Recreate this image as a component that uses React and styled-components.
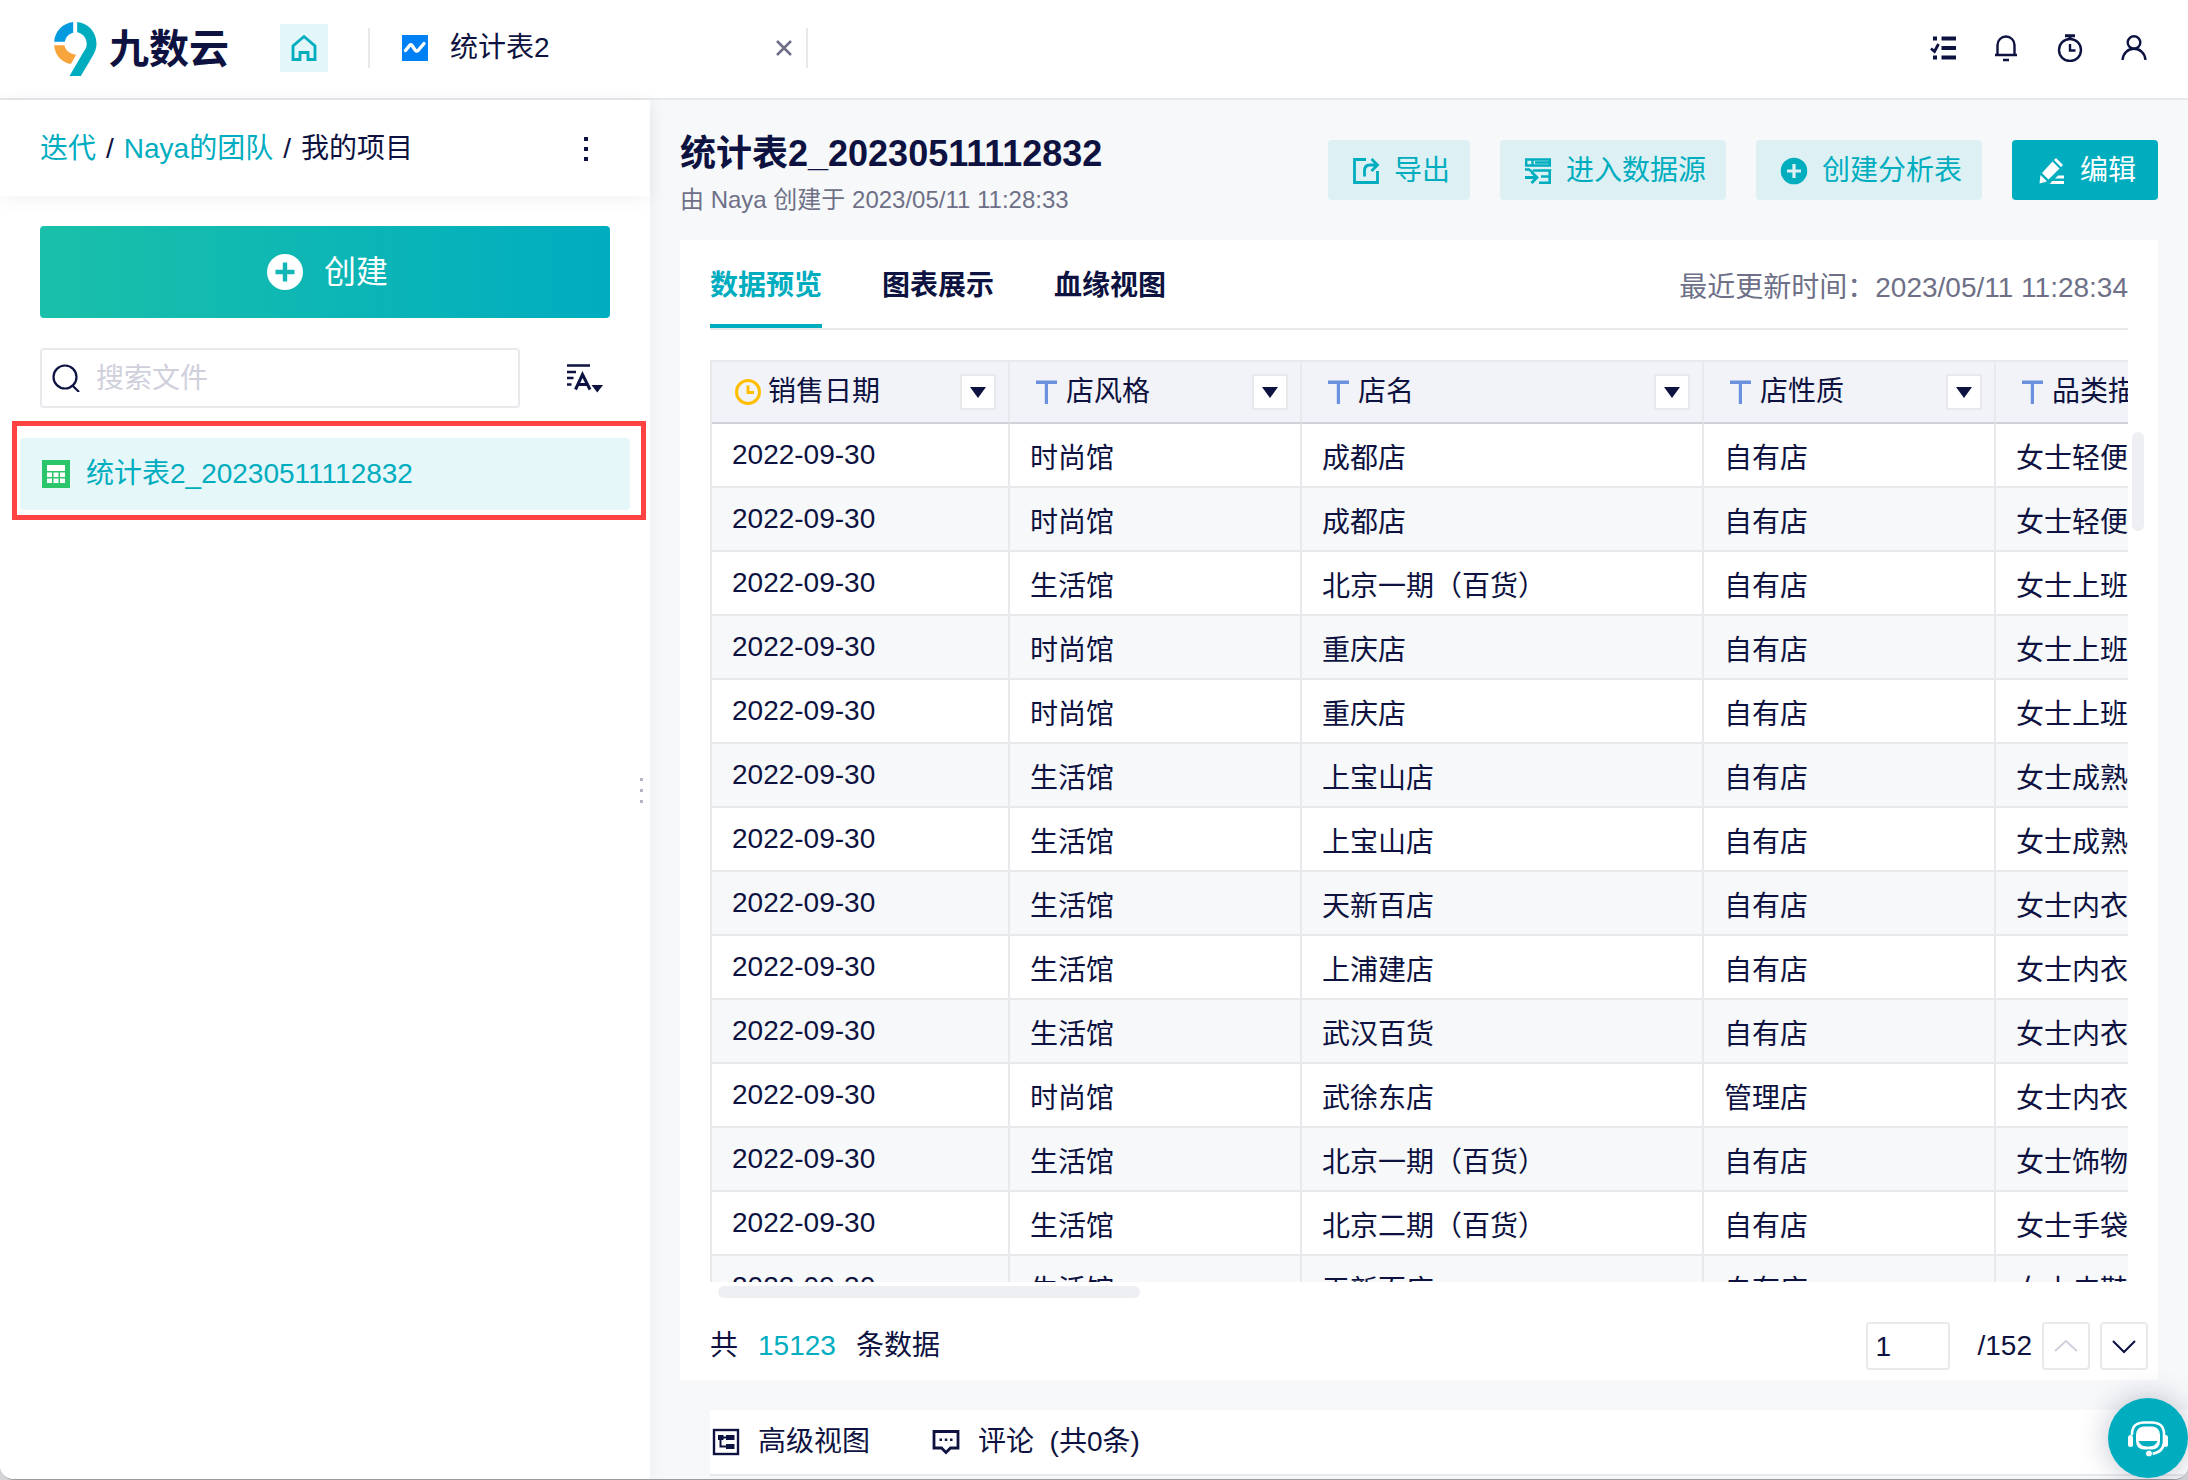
import React, {useState} from 'react'
import styled, {createGlobalStyle} from 'styled-components'

const navy = '#0d1240'
const teal = '#00adbf'
const line = '#e8e9ed'
const grey = '#6e7087'

const GlobalStyle = createGlobalStyle`
    * {
        box-sizing: border-box;
    }

    body {
        margin: 0;
        background: #d4d5d8;
    }

    body, button, input {
        font-family: "Liberation Sans", "Noto Sans CJK SC", sans-serif;
        font-size: 28px;
        line-height: 40px;
        color: ${navy};
    }

    button {
        padding: 0;
        border: 0;
        background: none;
        cursor: pointer;
    }

    a {
        color: ${teal};
        text-decoration: none;
    }

    svg {
        display: block;
        flex: none;
    }
`

const Window = styled.div`
    display: flex;
    flex-direction: column;
    height: 100vh;
    overflow: hidden;
    background: white;
    border-bottom: 1px solid #9c9c9e;
    border-radius: 0 0 14px 14px;
`

// top bar

const TopBar = styled.header`
    display: flex;
    align-items: center;
    height: 100px;
    flex: none;
    padding: 0 40px 2px 54px;
    border-bottom: 2px solid ${line};
`

const Brand = styled.div`
    display: flex;
    align-items: center;
    gap: 12px;
    width: 226px;
    padding-top: 2px;
    font-size: 40px;
    font-weight: bold;
    line-height: 48px;
    white-space: nowrap;
`

const HomeButton = styled.button`
    display: flex;
    align-items: center;
    justify-content: center;
    width: 48px;
    height: 48px;
    margin-right: 40px;
    background: #e3f6f9;
`

const OpenTab = styled.div`
    display: flex;
    align-items: center;
    width: 440px;
    height: 40px;
    padding: 0 14px 0 32px;
    border-left: 2px solid ${line};
    border-right: 2px solid ${line};
`

const OpenTabName = styled.span`
    flex: 1;
    margin-left: 22px;
`

const TopTools = styled.nav`
    display: flex;
    gap: 36px;
    margin-left: auto;
`

// left side

const Body = styled.div`
    display: flex;
    flex: 1;
    min-height: 0;
`

const Sidebar = styled.aside`
    position: relative;
    width: 650px;
    flex: none;
    background: white;
    box-shadow: 0 4px 20px rgba(13, 18, 64, 0.05);
`

const Crumbs = styled.div`
    display: flex;
    align-items: center;
    gap: 10px;
    height: 96px;
    padding: 2px 54px 0 40px;
    box-shadow: 0 4px 16px rgba(13, 18, 64, 0.05);
`

const MoreButton = styled.button`
    margin-left: auto;
`

const CreateButton = styled.button`
    display: flex;
    align-items: center;
    justify-content: center;
    gap: 20px;
    width: calc(100% - 80px);
    height: 92px;
    margin: 30px 40px;
    padding-left: 4px;
    border-radius: 4px;
    background: linear-gradient(90deg, #1ac0a9, #00adc0);
    color: white;
    font-size: 32px;
`

const SearchRow = styled.div`
    display: flex;
    align-items: center;
    justify-content: space-between;
    padding: 0 46px 0 40px;
`

const SearchBox = styled.label`
    display: flex;
    align-items: center;
    gap: 16px;
    width: 480px;
    height: 60px;
    padding: 0 10px;
    border: 2px solid ${line};
    border-radius: 4px;
`

const SearchInput = styled.input`
    flex: 1;
    min-width: 0;
    padding: 2px 0 0;
    border: 0;
    outline: 0;

    &::placeholder {
        color: #cfd0dc;
    }
`

const FileList = styled.ul`
    list-style: none;
    margin: 30px 20px 0;
    padding: 0;
`

const FileItem = styled.li`
    position: relative;
`

const FileLink = styled.a`
    display: flex;
    align-items: center;
    gap: 16px;
    height: 72px;
    padding: 0 22px;
    border-radius: 4px;
    background: #e5f7f9;
`

// red frame over the new file
const Marker = styled.span`
    position: absolute;
    inset: -17px -16px -10px -8px;
    border: 5px solid #ff4343;
    pointer-events: none;
`

const Grip = styled.span`
    position: absolute;
    right: 7px;
    top: 678px;
    display: grid;
    gap: 8px;

    i {
        width: 3px;
        height: 3px;
        background: #b4b5c0;
    }
`

// right side

const Main = styled.main`
    display: flex;
    flex: 1;
    min-width: 0;
    flex-direction: column;
    background: #f7f8fa;
`

const TitleRow = styled.div`
    display: flex;
    align-items: flex-start;
    justify-content: space-between;
    height: 140px;
    flex: none;
    padding: 30px 30px 0;
`

const Title = styled.h1`
    margin: 0;
    font-size: 36px;
    line-height: 48px;
`

const Subtitle = styled.p`
    margin: 4px 0 0;
    color: ${grey};
    font-size: 24px;
    line-height: 36px;
`

const Actions = styled.div`
    display: flex;
    gap: 30px;
    padding-top: 10px;
`

const ActionButton = styled.button`
    display: flex;
    align-items: center;
    gap: 14px;
    height: 60px;
    padding: ${props => props.$primary ? "2px 22px 0 26px" : "2px 20px 0 24px"};
    border-radius: 4px;
    background: ${props => props.$primary ? teal : "#ddf1f4"};
    color: ${props => props.$primary ? "white" : teal};
    white-space: nowrap;
`

const Card = styled.section`
    display: flex;
    flex: 1;
    min-height: 0;
    flex-direction: column;
    margin: 0 30px;
    background: white;
`

const TabRow = styled.div`
    display: flex;
    justify-content: space-between;
    height: 90px;
    flex: none;
    margin: 0 30px 30px;
    border-bottom: 2px solid ${line};
`

const Tabs = styled.div`
    display: flex;
    gap: 60px;
`

const Tab = styled.button`
    padding: 26px 0 18px;
    border-bottom: 4px solid ${props => props.$active ? teal : "transparent"};
    color: ${props => props.$active ? teal : navy};
    font-weight: bold;
`

const Updated = styled.span`
    padding-top: 28px;
    color: ${grey};
`

const TableArea = styled.div`
    display: grid;
    grid-template-columns: 1fr 12px;
    column-gap: 4px;
    flex: 1;
    min-height: 0;
    padding: 0 14px 0 30px;
`

const TableView = styled.div`
    min-width: 0;
    overflow: hidden;
`

const DataTable = styled.table`
    width: 1700px;
    table-layout: fixed;
    border-collapse: separate;
    border-spacing: 0;
    border-left: 2px solid ${line};
    white-space: nowrap;
`

const HeadCell = styled.th`
    width: ${props => props.$width}px;
    height: 64px;
    padding: 0 12px 0 22px;
    border-top: 2px solid ${line};
    border-right: 2px solid ${line};
    border-bottom: 2px solid #cfd1d8;
    background: #f2f3f8;
    font-weight: normal;
`

const HeadInner = styled.div`
    display: flex;
    align-items: center;
    gap: 6px;
`

const FilterButton = styled.button`
    display: flex;
    align-items: center;
    justify-content: center;
    width: 36px;
    height: 36px;
    margin-left: auto;
    border: 2px solid ${line};
    background: white;
`

const Row = styled.tr`
    background: ${props => props.$odd ? "#f7f8fa" : "white"};
`

const Cell = styled.td`
    height: 64px;
    padding: ${props => props.$text ? "8px 20px 0" : "0 20px"};
    border-right: 2px solid ${line};
    border-bottom: 2px solid ${line};
`

const VerticalThumb = styled.div`
    height: 99px;
    margin-top: 72px;
    border-radius: 6px;
    background: #eeeff2;
`

const HorizontalThumb = styled.div`
    width: 422px;
    height: 12px;
    flex: none;
    margin: 4px 38px 24px;
    border-radius: 6px;
    background: #eeeff2;
`

const CardFooter = styled.footer`
    display: flex;
    align-items: center;
    justify-content: space-between;
    height: 48px;
    flex: none;
    margin: 0 10px 10px 30px;
`

const Total = styled.div`
    display: flex;
    gap: 20px;

    b {
        color: ${teal};
        font-weight: normal;
    }
`

const Pager = styled.div`
    display: flex;
    align-items: center;
    gap: 10px;
`

const PageInput = styled.input`
    width: 84px;
    height: 48px;
    margin-right: 18px;
    padding: 2px 8px 0;
    border: 2px solid ${line};
    border-radius: 4px;
    outline: 0;
`

const PageButton = styled.button`
    display: flex;
    align-items: center;
    justify-content: center;
    width: 48px;
    height: 48px;
    border: 2px solid ${line};
    border-radius: 4px;
    color: ${navy};

    &:disabled {
        color: #cfd0dc;
    }
`

const BottomBar = styled.div`
    display: flex;
    align-items: center;
    gap: 62px;
    height: 66px;
    flex: none;
    margin: 30px 0 3px 60px;
    padding-left: 2px;
    border-bottom: 2px solid ${line};
    background: white;
`

const BottomItem = styled.button`
    display: flex;
    align-items: center;
    gap: 18px;
    white-space: pre;
`

const ServiceButton = styled.button`
    position: fixed;
    right: 0;
    bottom: 2px;
    display: flex;
    align-items: center;
    justify-content: center;
    width: 80px;
    height: 80px;
    border-radius: 50%;
    background: ${teal};
    box-shadow: 0 0 30px rgba(13, 18, 64, 0.25);
`

// icons

const Icon = ({size = 28, box = 28, children}) => (
    <svg width={size} height={size} viewBox={`0 0 ${box} ${box}`} fill="none" stroke="currentColor" strokeWidth="2.4" aria-hidden="true">
        {children}
    </svg>
)

const LogoMark = () => (
    <svg width="43" height="54" viewBox="0 0 128 162" aria-hidden="true">
        <path fill="#0599e0" d="M57 0V32C44 35 35 44 32 59H0C2 28 25 4 57 0Z" />
        <path fill="#f8a43c" d="M0 70H31C33 84 45 96 66 98L50 126C22 122 2 100 0 70Z" />
        <path fill="#00adbf" d="M69 0C102 3 127 30 127 65C127 80 122 92 112 108L80 162H46L88 90C97 78 99 70 97 60C95 45 84 34 69 31Z" />
    </svg>
)

const HomeIcon = () => (
    <Icon><path stroke={teal} strokeWidth="2.800" d="M3 25.500V12L14 2.500L25 12V25.500H18V18.500H10V25.500Z" /></Icon>
)

const SheetIcon = () => (
    <Icon size={26} box={26}>
        <rect width="26" height="26" fill="#0080f5" stroke="none" />
        <path stroke="white" strokeWidth="3.400" strokeLinejoin="round" strokeLinecap="round" d="M3.500 15.500L8 10Q9 9 10 10.500L13.500 15.500Q15 17 16.500 15L22 8.500" />
    </Icon>
)

const CloseIcon = () => (
    <Icon size={16} box={16}><path stroke={grey} strokeWidth="2.600" d="M1 1L15 15M15 1L1 15" /></Icon>
)

const TasksIcon = () => (
    <Icon>
        <path strokeWidth="3.800" d="M13.500 4.500H28M13.500 14H28M13.500 23.500H28M5 4.500H9M5 23.500H9" />
        <path strokeWidth="2.800" d="M3 14.500L6.500 17.500L10.500 10" />
    </Icon>
)

const BellIcon = () => (
    <Icon><path d="M3 21H25M5.500 20.500V11A8.500 8.500 0 0 1 22.500 11V20.500M11 26H17" /></Icon>
)

const TimerIcon = () => (
    <Icon>
        <circle cx="14" cy="16" r="11" />
        <path strokeWidth="3" d="M9 1.700H19M14 2V5" />
        <path d="M14 10V16.500H19.500" />
    </Icon>
)

const UserIcon = () => (
    <Icon>
        <circle cx="14" cy="8.500" r="6.300" />
        <path d="M2.500 26C3 19 8 14.800 14 14.800S25 19 25.500 26" />
    </Icon>
)

const DotsIcon = () => (
    <svg width="20" height="28" viewBox="0 0 20 28" fill={navy} aria-hidden="true">
        <path d="M8 2h4v4H8zM8 12h4v4H8zM8 22h4v4H8z" />
    </svg>
)

const PlusCircle = ({size, fill, plus}) => (
    <Icon size={size} box={38}>
        <circle cx="19" cy="19" r="18" fill={fill} stroke="none" />
        <path stroke={plus} strokeWidth="4.400" d="M19 9.500V28.500M9.500 19H28.500" />
    </Icon>
)

const SearchIcon = () => (
    <Icon>
        <circle cx="13" cy="13" r="11.500" strokeWidth="2.200" />
        <path strokeWidth="2.200" d="M20.500 21.500L27 28" />
    </Icon>
)

const SortIcon = () => (
    <svg width="38" height="30" viewBox="0 0 38 30" fill="none" stroke={navy} strokeWidth="2.400" aria-hidden="true">
        <path d="M1 2.500H24M1 9H10M1 15H7.500M1 21.500H5.500" />
        <path strokeWidth="3" d="M9.500 26.500L16.500 11.500L24 26.500M12 21.500H21.500" />
        <path fill={navy} stroke="none" d="M25.500 22H37L31.300 29.500Z" />
    </svg>
)

const TableFileIcon = () => (
    <Icon>
        <rect width="28" height="28" fill="#2bc66c" stroke="none" />
        <path fill="white" stroke="none" d="M5 5h18v6H5zM5 12.500h5v4.500H5zM11.500 12.500h5v4.500h-5zM18 12.500h5v4.500h-5zM5 18.500h5v4.500H5zM11.500 18.500h5v4.500h-5zM18 18.500h5v4.500h-5z" />
    </Icon>
)

const ExportIcon = () => (
    <Icon>
        <path strokeWidth="2.800" d="M14 2.500H2.500V25.500H25.500V14" />
        <path strokeWidth="2.800" d="M12.500 19.500V14C12.500 10 14.500 8 18 8H25M19.500 2L25.500 8L19.500 14" />
    </Icon>
)

const SourceIcon = () => (
    <Icon>
        <path strokeWidth="2.400" d="M1 2.500H27M1 8.500H27M2.200 2V9M25.800 2V9M8.500 2V9M11 5.500H26" />
        <path strokeWidth="2.600" d="M9 13.500H26V14M17 19.500H26M15 25.700H27M25.700 13V26" />
        <path strokeWidth="2.400" d="M1 12.500H5L8.500 15" />
        <path strokeWidth="2.800" d="M1 20.500H12M7.500 15L13 20.500L7.500 26" />
    </Icon>
)

const EditIcon = () => (
    <Icon>
        <path fill="white" stroke="none" d="M14.500 4.500L21.500 11.500L10.500 22.500L4 16ZM16 3L18 1L25 8L23 10ZM2.500 18L9 24.500L1.500 26.500ZM14 24H26V27H12ZM20 18.500H26V21.500H17Z" />
    </Icon>
)

const ClockIcon = () => (
    <Icon>
        <circle cx="14" cy="14" r="11.500" stroke="#ffbf00" strokeWidth="3" />
        <path stroke="#ffbf00" strokeWidth="3" d="M14 7.500V14.500H20" />
    </Icon>
)

const TypeIcon = () => (
    <Icon>
        <path fill="#6b90dd" stroke="none" d="M4 2.500H25V6H16V26H12.800V6H4Z" />
    </Icon>
)

const ArrowDown = () => (
    <svg width="16" height="12" viewBox="0 0 16 12" fill={navy} aria-hidden="true"><path d="M0 1H16L8 12Z" /></svg>
)

const Chevron = ({d}) => (
    <Icon><path strokeWidth="2" d={d} /></Icon>
)

const ViewIcon = () => (
    <Icon>
        <rect x="2" y="2" width="24" height="24" />
        <path fill={navy} stroke="none" d="M6 7h5.500v5H6zM14 7H22.500v5h-8.500zM14 16H22.500v5h-8.500z" />
        <path strokeWidth="2" d="M8.500 9.500H16M8.500 10V18.500H16" />
    </Icon>
)

const CommentIcon = () => (
    <Icon>
        <path strokeWidth="2.800" d="M2 3.500H26V20H18.500L14 24.500L9.500 20H2Z" />
        <path fill={navy} stroke="none" d="M7.500 10.500h2.500v2.500H7.500zM12.800 10.500h2.500v2.500h-2.500zM18 10.500h2.500v2.500H18z" />
    </Icon>
)

const HeadsetIcon = () => (
    <Icon size={40} box={40}>
        <path stroke="white" strokeWidth="2.600" d="M4 17V16C4 8 9 4.500 16 4.500H24C31 4.500 36 8 36 16V25C35 32 30 35.500 22 36" />
        <rect x="8" y="8.500" width="24" height="23" rx="8" fill="white" stroke="none" />
        <path fill={teal} stroke="none" d="M10.500 23H29.500C28 27.500 24 28.500 20 28.500S12 27.500 10.500 23Z" />
        <rect x="0" y="17" width="5" height="12" rx="2.500" fill="white" stroke="none" />
        <rect x="35" y="17" width="5" height="12" rx="2.500" fill="white" stroke="none" />
        <circle cx="21" cy="35.500" r="3.500" fill="white" stroke={teal} strokeWidth="1" />
    </Icon>
)

// data

const columns = [
    {name: '销售日期', width: 298, date: true},
    {name: '店风格', width: 292},
    {name: '店名', width: 402},
    {name: '店性质', width: 292},
    {name: '品类描述', width: 414},
]

const rows = [
    ['2022-09-30', '时尚馆', '成都店', '自有店', '女士轻便'],
    ['2022-09-30', '时尚馆', '成都店', '自有店', '女士轻便'],
    ['2022-09-30', '生活馆', '北京一期（百货）', '自有店', '女士上班'],
    ['2022-09-30', '时尚馆', '重庆店', '自有店', '女士上班'],
    ['2022-09-30', '时尚馆', '重庆店', '自有店', '女士上班'],
    ['2022-09-30', '生活馆', '上宝山店', '自有店', '女士成熟'],
    ['2022-09-30', '生活馆', '上宝山店', '自有店', '女士成熟'],
    ['2022-09-30', '生活馆', '天新百店', '自有店', '女士内衣'],
    ['2022-09-30', '生活馆', '上浦建店', '自有店', '女士内衣'],
    ['2022-09-30', '生活馆', '武汉百货', '自有店', '女士内衣'],
    ['2022-09-30', '时尚馆', '武徐东店', '管理店', '女士内衣'],
    ['2022-09-30', '生活馆', '北京一期（百货）', '自有店', '女士饰物'],
    ['2022-09-30', '生活馆', '北京二期（百货）', '自有店', '女士手袋'],
    ['2022-09-30', '生活馆', '天新百店', '自有店', '女士皮鞋'],
]

const tabNames = ['数据预览', '图表展示', '血缘视图']

const PreviewTable = () => (
    <TableArea>
        <TableView>
            <DataTable>
                <thead>
                    <tr>
                        {columns.map((col) => (
                            <HeadCell key={col.name} $width={col.width}>
                                <HeadInner>
                                    {col.date ? <ClockIcon /> : <TypeIcon />}
                                    {col.name}
                                    <FilterButton aria-label={col.name}><ArrowDown /></FilterButton>
                                </HeadInner>
                            </HeadCell>
                        ))}
                    </tr>
                </thead>
                <tbody>
                    {rows.map((row, i) => (
                        <Row key={i} $odd={i % 2 === 1}>
                            {row.map((item, j) => <Cell key={j} $text={j > 0}>{item}</Cell>)}
                        </Row>
                    ))}
                </tbody>
            </DataTable>
        </TableView>
        <VerticalThumb />
    </TableArea>
)

const App = () => {

    const [tab, setTab] = useState(0)
    const [page, setPage] = useState('1')

    return (
        <Window>
            <GlobalStyle />
            <TopBar>
                <Brand><LogoMark />九数云</Brand>
                <HomeButton aria-label="home"><HomeIcon /></HomeButton>
                <OpenTab>
                    <SheetIcon />
                    <OpenTabName>统计表2</OpenTabName>
                    <button aria-label="close"><CloseIcon /></button>
                </OpenTab>
                <TopTools>
                    <button aria-label="tasks"><TasksIcon /></button>
                    <button aria-label="messages"><BellIcon /></button>
                    <button aria-label="timer"><TimerIcon /></button>
                    <button aria-label="account"><UserIcon /></button>
                </TopTools>
            </TopBar>
            <Body>
                <Sidebar>
                    <Crumbs>
                        <a href="#team">迭代</a>
                        <span>/</span>
                        <a href="#naya">Naya的团队</a>
                        <span>/</span>
                        <span>我的项目</span>
                        <MoreButton aria-label="more"><DotsIcon /></MoreButton>
                    </Crumbs>
                    <CreateButton><PlusCircle size={38} fill="white" plus="#0fb6b5" />创建</CreateButton>
                    <SearchRow>
                        <SearchBox>
                            <SearchIcon />
                            <SearchInput type="text" placeholder="搜索文件" />
                        </SearchBox>
                        <button aria-label="sort"><SortIcon /></button>
                    </SearchRow>
                    <FileList>
                        <FileItem>
                            <FileLink href="#file"><TableFileIcon />统计表2_20230511112832</FileLink>
                            <Marker />
                        </FileItem>
                    </FileList>
                    <Grip><i /><i /><i /></Grip>
                </Sidebar>
                <Main>
                    <TitleRow>
                        <div>
                            <Title>统计表2_20230511112832</Title>
                            <Subtitle>由 Naya 创建于 2023/05/11 11:28:33</Subtitle>
                        </div>
                        <Actions>
                            <ActionButton><ExportIcon />导出</ActionButton>
                            <ActionButton><SourceIcon />进入数据源</ActionButton>
                            <ActionButton><PlusCircle size={28} fill={teal} plus="#ddf1f4" />创建分析表</ActionButton>
                            <ActionButton $primary><EditIcon />编辑</ActionButton>
                        </Actions>
                    </TitleRow>
                    <Card>
                        <TabRow>
                            <Tabs>
                                {tabNames.map((name, i) => (
                                    <Tab key={name} $active={i === tab} onClick={() => setTab(i)}>{name}</Tab>
                                ))}
                            </Tabs>
                            <Updated>最近更新时间：2023/05/11 11:28:34</Updated>
                        </TabRow>
                        <PreviewTable />
                        <HorizontalThumb />
                        <CardFooter>
                            <Total>共<b>15123</b>条数据</Total>
                            <Pager>
                                <PageInput aria-label="page" value={page} onChange={(e) => setPage(e.target.value)} />
                                <span>/152</span>
                                <PageButton aria-label="previous" disabled><Chevron d="M3 19L14 9L25 19" /></PageButton>
                                <PageButton aria-label="next"><Chevron d="M3 9L14 20L25 9" /></PageButton>
                            </Pager>
                        </CardFooter>
                    </Card>
                    <BottomBar>
                        <BottomItem><ViewIcon />高级视图</BottomItem>
                        <BottomItem><CommentIcon />{'评论  (共0条)'}</BottomItem>
                    </BottomBar>
                </Main>
            </Body>
            <ServiceButton aria-label="service"><HeadsetIcon /></ServiceButton>
        </Window>
    )
}

export default App
